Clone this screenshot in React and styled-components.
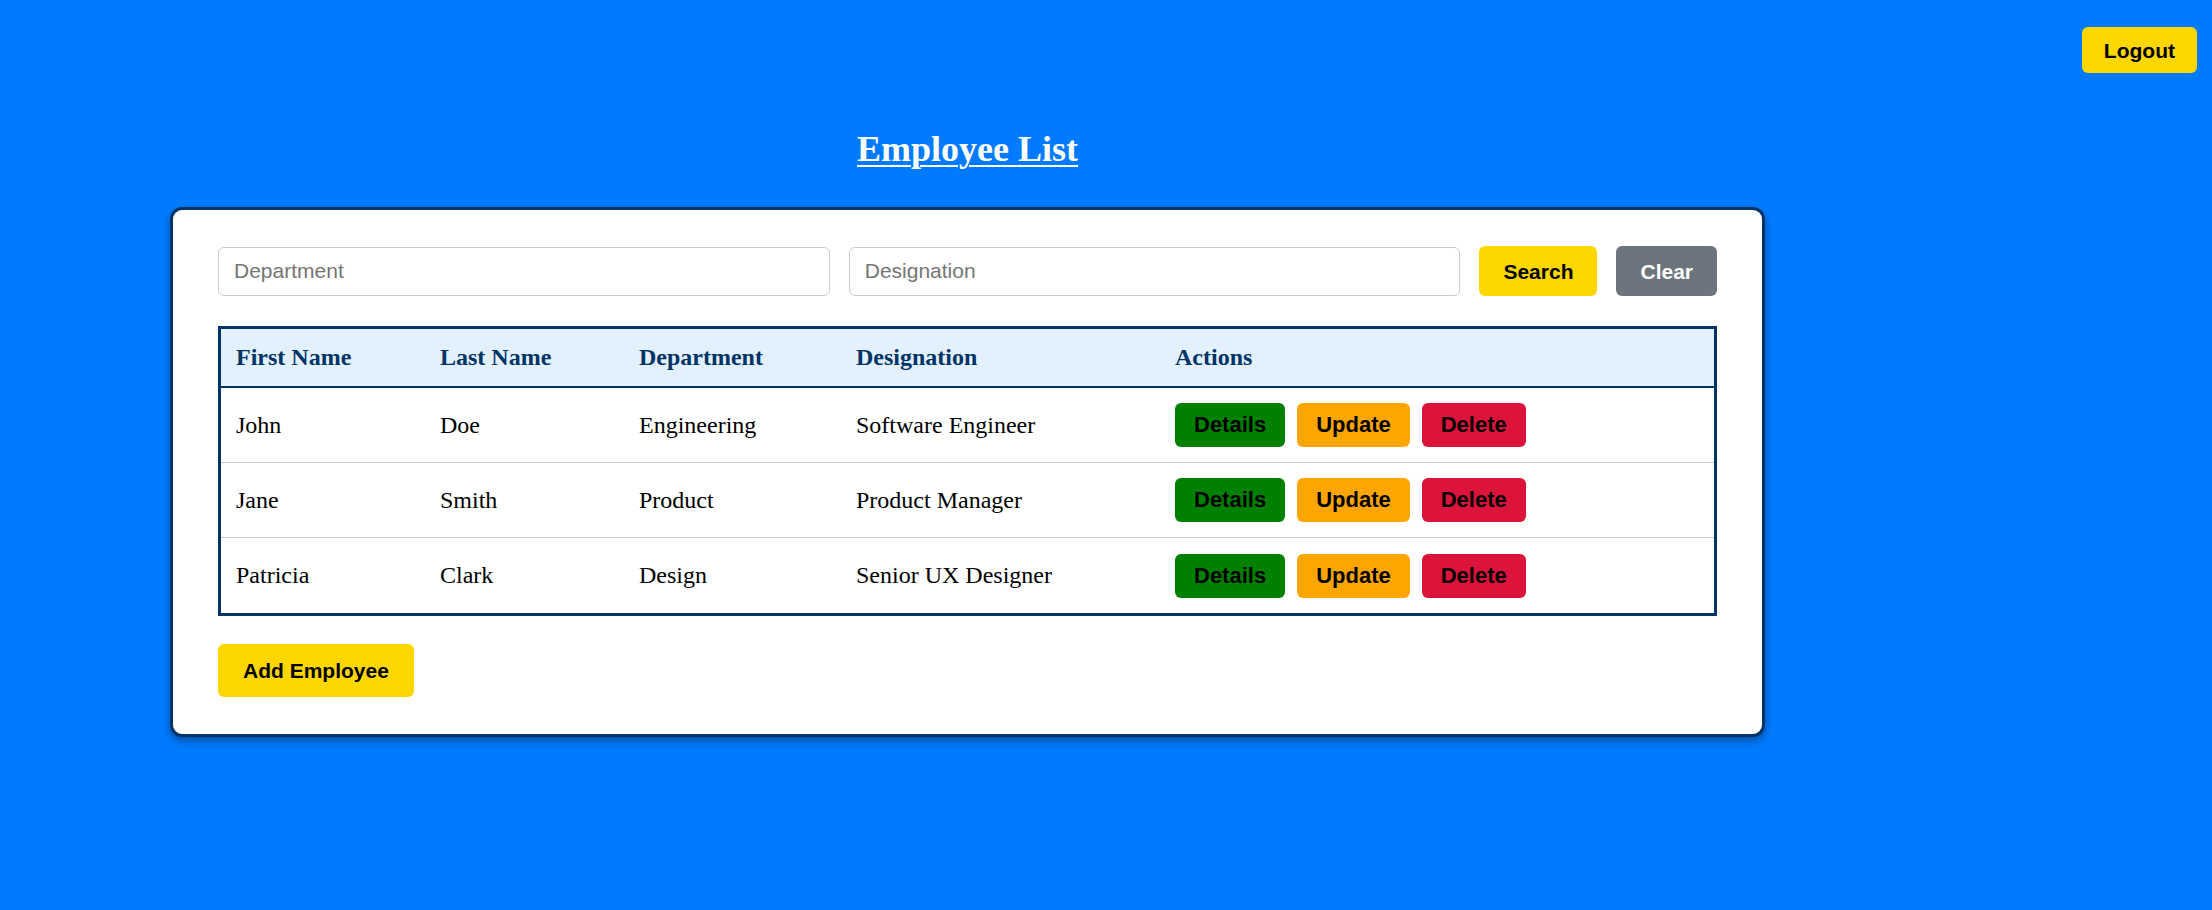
import React from "react";
import styled, { createGlobalStyle } from "styled-components";

const GlobalStyle = createGlobalStyle`
  html, body {
    margin: 0;
    padding: 0;
    background: #007bff;
  }
  body {
    font-family: "Liberation Serif", "Times New Roman", serif;
  }
  * { box-sizing: border-box; }
`;

const Page = styled.div`
  min-height: 910px;
  background: #007bff;
`;

const TopBar = styled.div`
  display: flex;
  justify-content: flex-end;
  padding: 27px 15px 0 0;
`;

const Btn = styled.button`
  font-family: "Liberation Sans", Arial, sans-serif;
  font-weight: bold;
  font-size: 21px;
  line-height: 1;
  height: ${(p) => p.$h || 44}px;
  padding: 0 ${(p) => p.$px || 18}px;
  border: none;
  border-radius: 6px;
  background: ${(p) => p.$bg};
  color: ${(p) => p.$fg || "#000"};
  cursor: pointer;
  white-space: nowrap;
`;

const Main = styled.div`
  width: 1595px;
  margin-left: 170px;
`;

const Title = styled.h2`
  margin: 56px 0 38px;
  font-family: "Liberation Serif", "Times New Roman", serif;
  font-size: 36px;
  line-height: 40px;
  font-weight: bold;
  color: #fff;
  text-align: center;
  text-decoration: underline;
  text-decoration-thickness: 2px;
  text-underline-offset: 4px;
`;

const Card = styled.div`
  background: #fff;
  border: 3px solid #003366;
  border-radius: 12px;
  padding: 36px 45px 37px;
  box-shadow: 0 4px 8px rgba(0, 0, 0, 0.35);
  display: flex;
  flex-direction: column;
  align-items: flex-start;
`;

const SearchRow = styled.div`
  display: flex;
  align-items: center;
  gap: 19px;
  width: 100%;
`;

const Input = styled.input`
  flex: 1;
  min-width: 0;
  height: 49px;
  border: 1px solid #ccc;
  border-radius: 6px;
  padding: 0 15px;
  font-family: "Liberation Sans", Arial, sans-serif;
  font-size: 21px;
  color: #333;
  background: #fff;
  &::placeholder { color: #757575; }
`;

const Table = styled.table`
  width: 100%;
  margin-top: 30px;
  border: 3px solid #003366;
  border-collapse: separate;
  border-spacing: 0;
  table-layout: fixed;
`;

const Th = styled.th`
  background: #e3f0fd;
  color: #003366;
  font-family: "Liberation Serif", "Times New Roman", serif;
  font-size: 24px;
  font-weight: bold;
  line-height: 27px;
  text-align: left;
  padding: 15px;
  border-bottom: 2px solid #003366;
`;

const Tr = styled.tr`
  &:last-child td { border-bottom: none; }
`;

const Td = styled.td`
  font-family: "Liberation Serif", "Times New Roman", serif;
  font-size: 24px;
  line-height: 27px;
  color: #000;
  padding: 15px;
  height: 75px;
  vertical-align: middle;
  border-bottom: 1px solid #ccc;
`;

const Actions = styled.div`
  display: flex;
  gap: 12px;
`;

const ActionBtn = styled(Btn)`
  font-size: 22px;
`;

const AddBtn = styled(Btn)`
  margin-top: 28px;
`;

const employees = [
  { first: "John", last: "Doe", dept: "Engineering", desig: "Software Engineer" },
  { first: "Jane", last: "Smith", dept: "Product", desig: "Product Manager" },
  { first: "Patricia", last: "Clark", dept: "Design", desig: "Senior UX Designer" },
];

const cols = [204, 199, 217, 319, null];

export default function App() {
  return (
    <Page>
      <GlobalStyle />
      <TopBar>
        <Btn $bg="#ffd700" $h={46} $px={22}>Logout</Btn>
      </TopBar>
      <Main>
        <Title>Employee List</Title>
        <Card>
          <SearchRow>
            <Input placeholder="Department" />
            <Input placeholder="Designation" />
            <Btn $bg="#ffd700" $h={50} $px={24}>Search</Btn>
            <Btn $bg="#6c757d" $fg="#fff" $h={50} $px={24}>Clear</Btn>
          </SearchRow>
          <Table>
            <colgroup>
              {cols.map((w, i) => (
                <col key={i} style={w ? { width: w } : undefined} />
              ))}
            </colgroup>
            <thead>
              <tr>
                <Th>First Name</Th>
                <Th>Last Name</Th>
                <Th>Department</Th>
                <Th>Designation</Th>
                <Th>Actions</Th>
              </tr>
            </thead>
            <tbody>
              {employees.map((e) => (
                <Tr key={e.first}>
                  <Td>{e.first}</Td>
                  <Td>{e.last}</Td>
                  <Td>{e.dept}</Td>
                  <Td>{e.desig}</Td>
                  <Td>
                    <Actions>
                      <ActionBtn $bg="#008000" $px={19}>Details</ActionBtn>
                      <ActionBtn $bg="#ffa500" $px={19}>Update</ActionBtn>
                      <ActionBtn $bg="#dc143c" $px={19}>Delete</ActionBtn>
                    </Actions>
                  </Td>
                </Tr>
              ))}
            </tbody>
          </Table>
          <AddBtn $bg="#ffd700" $h={53} $px={25}>Add Employee</AddBtn>
        </Card>
      </Main>
    </Page>
  );
}
